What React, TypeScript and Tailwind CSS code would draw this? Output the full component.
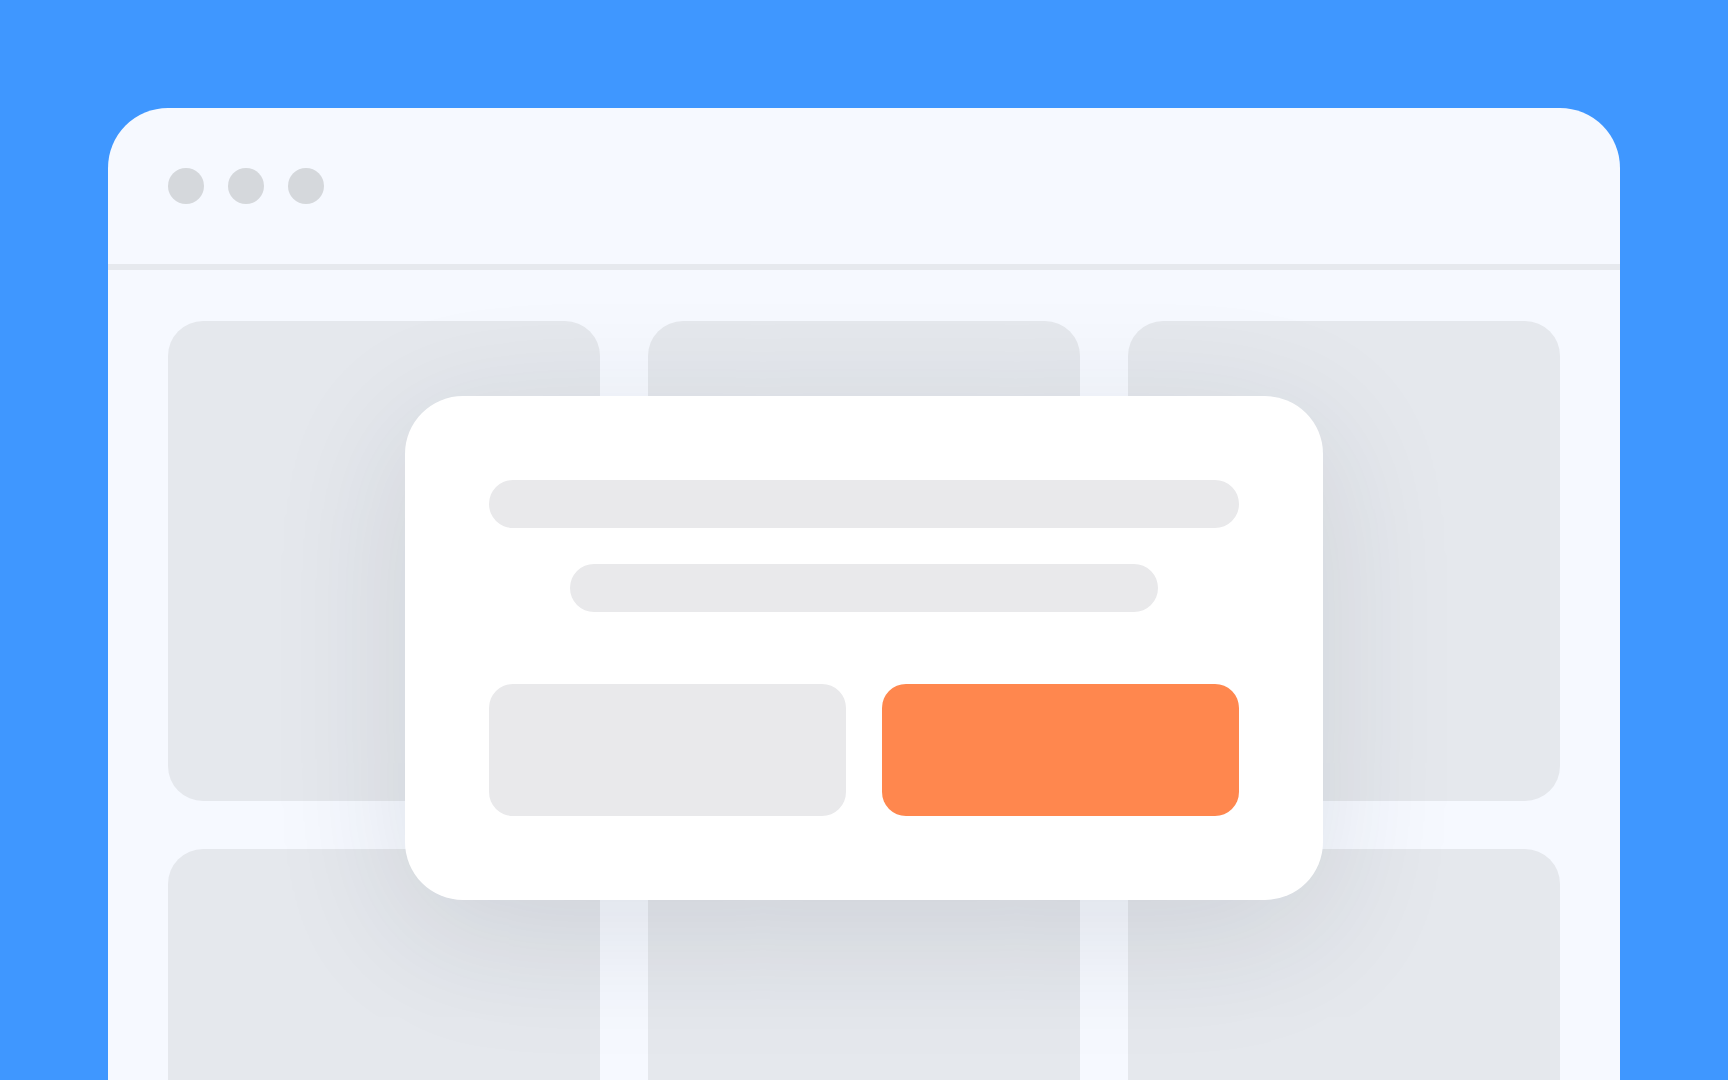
import React from 'react';

const Dot: React.FC = () => <div className="w-9 h-9 rounded-full bg-[#d5d8dc]" />;

const Card: React.FC = () => <div className="h-[480px] rounded-[35px] bg-[#e5e8ed]" />;

const App: React.FC = () => {
  return (
    <div className="h-screen w-full overflow-hidden bg-[#3f97ff] px-[108px] pt-[108px]">
      <div className="relative h-[1100px] rounded-t-[60px] bg-[#f6f9ff]">
        {/* title bar */}
        <div className="h-[156px] flex items-center gap-6 px-[60px]">
          <Dot />
          <Dot />
          <Dot />
        </div>
        <div className="h-[6px] bg-[#e6e9ee]" />

        {/* grid of placeholder cards */}
        <div className="grid grid-cols-3 gap-12 px-[60px] pt-[51px]">
          <Card />
          <Card />
          <Card />
          <Card />
          <Card />
          <Card />
        </div>

        {/* dialog */}
        <div className="absolute left-[297px] top-[288px] w-[918px] rounded-[58px] bg-white p-[84px] shadow-[0_32px_140px_rgba(30,41,59,0.12)]">
          <div className="flex flex-col items-center gap-9">
            <div className="h-12 w-full rounded-full bg-[#e9e9eb]" />
            <div className="h-12 w-[588px] rounded-full bg-[#e9e9eb]" />
          </div>
          <div className="mt-[72px] grid grid-cols-2 gap-9">
            <div className="h-[132px] rounded-3xl bg-[#e9e9eb]" />
            <div className="h-[132px] rounded-3xl bg-[#ff874e]" />
          </div>
        </div>
      </div>
    </div>
  );
};

export default App;
